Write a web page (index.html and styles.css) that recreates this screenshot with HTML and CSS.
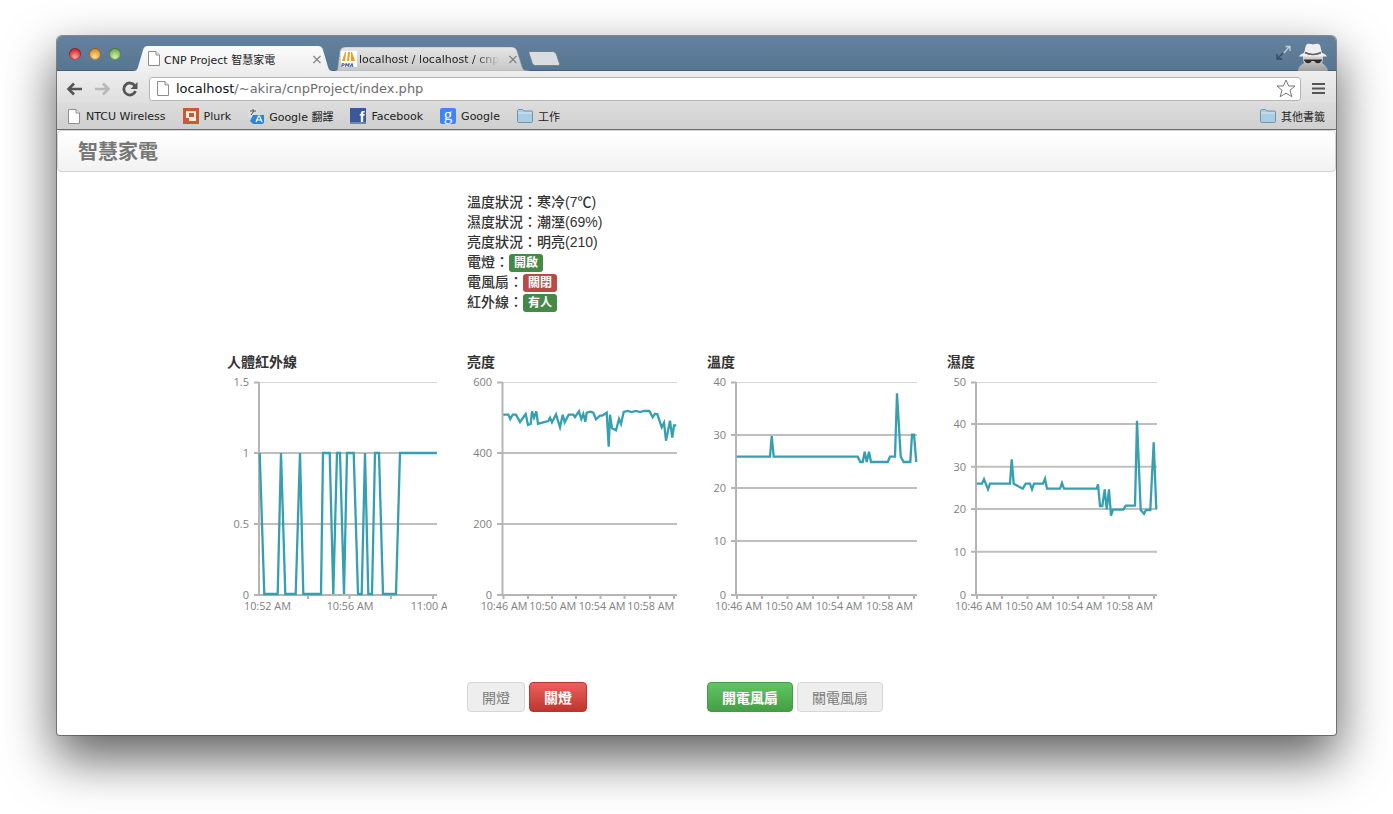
FILE: index.html
```html
<!DOCTYPE html>
<html lang="zh-Hant">
<head>
    <meta charset="UTF-8">
    <title>CNP Project 智慧家電</title>
    <link rel="stylesheet" href="styles.css">
</head>
<body>
    <svg class="defs" width="0" height="0">
        <defs>
            <symbol id="doc" viewBox="0 0 12 15">
                <path d="M.5.5h7.500l3.500 3.500v10.500h-11z" fill="#fff" stroke="#8e8e8e"/>
                <path d="M8 .5v3.500h3.500" fill="#eee" stroke="#8e8e8e"/>
            </symbol>
            <symbol id="folder" viewBox="0 0 16 14">
                <path d="M.5 2c0-1 .5-1.500 1.500-1.500h3.500l1.500 1.500h7.500c.7 0 1 .4 1 1v9.500c0 .6-.4 1-1 1h-12.500c-.9 0-1.500-.4-1.500-1z" fill="#a9cde2" stroke="#6f94ac"/>
                <path d="M1 4h14" stroke="#d9ebf5"/>
            </symbol>
            <linearGradient id="tabOn" x1="0" y1="0" x2="0" y2="1">
                <stop offset="0" stop-color="#fbfbfb"/><stop offset="1" stop-color="#eeeeee"/>
            </linearGradient>
            <linearGradient id="tabOff" x1="0" y1="0" x2="0" y2="1">
                <stop offset="0" stop-color="#e6e6e6"/><stop offset="1" stop-color="#c6c6c6"/>
            </linearGradient>
            <linearGradient id="spyFace" x1="0" y1="0" x2="0" y2="1">
                <stop offset="0" stop-color="#d6d6d6"/><stop offset="1" stop-color="#9d9d9d"/>
            </linearGradient>
        </defs>
    </svg>

    <div class="window">
        <div class="titlebar">
            <div class="lights">
                <span class="light red"></span>
                <span class="light amber"></span>
                <span class="light green"></span>
            </div>
            <div class="tabs">
                <div class="tab tab-on">
                    <svg class="tab-bg" width="200" height="25"><path d="M0 25c3 0 4-1 5-4l5-17c1-3 2-4 5-4h170c3 0 4 1 5 4l5 17c1 3 2 4 5 4z" fill="url(#tabOn)"/></svg>
                    <svg class="ico-doc" width="12" height="15"><use href="#doc"/></svg>
                    <span class="tab-title">CNP Project 智慧家電</span>
                    <span class="tab-x">×</span>
                </div>
                <div class="tab tab-off">
                    <svg class="tab-bg" width="195" height="24"><path d="M0 24c2 0 3-1 3-4l2-16c1-3 3-4 6-4h165c3 0 5 1 6 4l5 16c1 3 3 4 8 4z" fill="url(#tabOff)" stroke="#8c9aa8" stroke-width=".5"/></svg>
                    <svg class="ico-pma" width="16" height="16" viewBox="0 0 16 16">
                        <rect width="16" height="16" fill="#fff"/>
                        <path d="M1 10l3-9h1l-1 9zM6 10l1-9h2l-1 9zM10 10v-9h1l3 9z" fill="#f29a1f"/>
                        <text x="0" y="15.500" class="pma-text">PMA</text>
                    </svg>
                    <span class="tab-title tab-fade">localhost / localhost / cnp</span>
                    <span class="tab-x">×</span>
                </div>
                <svg class="tab-new" width="33" height="16"><path d="M1.500 .5h23c2 0 3 1 4 3l3 9c.4 1.500-.5 2-2 2h-22c-2 0-3-1-3.500-3l-3-9c-.3-1.300 .5-2 .5-2z" fill="#d8dde2" stroke="#6f7f8e"/></svg>
            </div>
            <svg class="ico-full" width="15" height="16" viewBox="0 0 15 16">
                <path d="M8 8l5-6M9.500 1.500h4.500v4.500" fill="none" stroke="#c3ced8" stroke-width="1.300"/>
                <path d="M7 8l-5 5M1 9v5h5" fill="none" stroke="#2f4a61" stroke-width="1.300"/>
            </svg>
            <svg class="ico-spy" width="32" height="28" viewBox="0 0 32 28">
                <path d="M1 28c0-4 3-6 6-8-1-2-1-4-1-7h20c0 3 0 5-1 7 3 2 5 4 6 8z" fill="url(#spyFace)"/>
                <path d="M9 2c2-2 5-1 7-.5 2-.5 5-1.500 7 .5l2 8c2 .5 4 1.500 5 3.500H2c1-2 3-3 5-3.500z" fill="#efefef"/>
                <path d="M8 9.500c4 2.500 12 2.500 16 0" fill="none" stroke="#5f5f5f" stroke-width="1.500"/>
                <path d="M7 16.500h18v1l-1 .5c-.5 3-5.500 3-6.500 0h-3c-1 3-6 3-6.500 0l-1-.5z" fill="#2c2c2c"/>
            </svg>
        </div>

        <div class="toolbar">
            <svg class="nav-ico" width="17" height="14" viewBox="0 0 17 14"><path d="M16 7H3M8 1.500L2.500 7 8 12.500" fill="none" stroke="#555" stroke-width="2.600"/></svg>
            <svg class="nav-ico" width="17" height="14" viewBox="0 0 17 14"><path d="M1 7h13M9 1.500L14.500 7 9 12.500" fill="none" stroke="#b8b8b8" stroke-width="2.600"/></svg>
            <svg class="nav-ico" width="16" height="16" viewBox="0 0 16 16"><path d="M13.500 10a6 6 0 1 1-.8-5.500" fill="none" stroke="#555" stroke-width="2.800"/><path d="M15.500 1v7h-7z" fill="#555"/></svg>
            <div class="omnibox">
                <svg class="ico-doc" width="12" height="15"><use href="#doc"/></svg>
                <span class="url"><b>localhost</b>/~akira/cnpProject/index.php</span>
                <svg class="ico-star" width="20" height="19" viewBox="0 0 20 19"><path d="M10 1l2.700 6h6.300l-5 4.200 1.800 6.500L10 14.200l-5.800 3.500L6 11.200 1 7h6.300z" fill="#fff" stroke="#777"/></svg>
            </div>
            <svg class="ico-menu" width="13" height="13" viewBox="0 0 13 13"><path d="M0 2h13M0 6.500h13M0 11h13" stroke="#555" stroke-width="2.200"/></svg>
        </div>

        <div class="bookmarks">
            <a class="mark"><svg class="mark-doc" width="12" height="15"><use href="#doc"/></svg>NTCU Wireless</a>
            <a class="mark">
                <svg width="16" height="16" viewBox="0 0 16 16"><rect width="16" height="16" fill="#cb5a2e"/><rect x="3" y="3" width="10" height="10" fill="#f5ece6"/><rect x="6" y="5" width="5" height="4" fill="#cb5a2e"/><rect x="3" y="10" width="3" height="3" fill="#cb5a2e"/></svg>Plurk</a>
            <a class="mark">
                <svg width="16" height="16" viewBox="0 0 16 16"><rect width="10" height="10" rx="1" fill="#dcdcdc"/><path d="M2 3h6M5 1v2M3 7l3-4" stroke="#555" fill="none"/><path d="M5 7l-3 6 3 3h9c1 0 2-1 2-2V7z" fill="#2b86d9"/><path d="M8 14l2.500-6h1l2.500 6M9 12h4" stroke="#fff" fill="none" stroke-width="1.200"/></svg>Google 翻譯</a>
            <a class="mark"><span class="logo logo-fb">f</span>Facebook</a>
            <a class="mark"><span class="logo logo-g">g</span>Google</a>
            <a class="mark"><svg width="16" height="14"><use href="#folder"/></svg>工作</a>
            <a class="mark mark-end"><svg width="16" height="14"><use href="#folder"/></svg>其他書籤</a>
        </div>

        <div class="page">
            <div class="navbar"><span class="brand">智慧家電</span></div>

            <div class="container">
                <div class="row">
                    <div class="status">
                        溫度狀況：寒冷(7℃)<br>
                        濕度狀況：潮溼(69%)<br>
                        亮度狀況：明亮(210)<br>
                        電燈：<span class="label label-ok">開啟</span><br>
                        電風扇：<span class="label label-off">關閉</span><br>
                        紅外線：<span class="label label-ok">有人</span>
                    </div>
                </div>

                <div class="row charts">
                    <div class="chart">
                        <div class="chart-title">人體紅外線</div>
                        <svg width="220" height="240">
                            <path class="grid-top" d="M32 10.500H210"/>
                            <path class="grid" d="M32 81H210M32 152H210"/>
                            <path class="axis" d="M32 10V223M27 10.500h5M27 81h5M27 152h5M27 223H210M81 223v4M122.500 223v4M164 223v4M206 223v4"/>
                            <text class="tick end" x="22" y="14">1.5</text>
                            <text class="tick end" x="22" y="85">1</text>
                            <text class="tick end" x="22" y="156">0.5</text>
                            <text class="tick end" x="22" y="227">0</text>
                            <text class="tick" x="17" y="238">10:52 AM</text>
                            <text class="tick" x="99.700" y="238">10:56 AM</text>
                            <text class="tick" x="183.700" y="238">11:00 A</text>
                            <polyline class="line" points="32.700,81 37.300,222 50.700,222 54,81 58.300,222 68.700,222 73,81 76.300,222 94,222 96,81 102.700,81 106.300,222 110,81 113,81 117,222 120,81 126.700,81 131,222 134.700,222 138,81 141.300,222 145,222 148,81 152,81 156,222 169,222 173,81 209.700,81"/>
                        </svg>
                    </div>
                    <div class="chart">
                        <div class="chart-title">亮度</div>
                        <svg width="220" height="240">
                            <path class="grid-top" d="M35 10.500H210"/>
                            <path class="grid" d="M35 81H210M35 152H210"/>
                            <path class="axis" d="M35.500 10V223M30 10.500h5M30 81h5M30 152h5M30 223H210M36.500 223v4M61 223v4M85 223v4M109 223v4M133.500 223v4M157.500 223v4M183 223v4M207 223v4"/>
                            <text class="tick end" x="25" y="14">600</text>
                            <text class="tick end" x="25" y="85">400</text>
                            <text class="tick end" x="25" y="156">200</text>
                            <text class="tick end" x="25" y="227">0</text>
                            <text class="tick" x="13.700" y="238">10:46 AM</text>
                            <text class="tick" x="62.300" y="238">10:50 AM</text>
                            <text class="tick" x="111.700" y="238">10:54 AM</text>
                            <text class="tick" x="160.300" y="238">10:58 AM</text>
                            <polyline class="line" points="36.300,42.700 41.300,42.700 43.300,47 45.700,42.700 49,42.700 53,50 58.700,42 61,53 63.700,52 65,39.300 67,45.700 69.300,39.300 71,51.700 81.300,49 83,45.700 85,50.300 89,42.300 93,55.300 95.700,42.700 97.700,50.300 101.700,42.700 106.300,42.700 108,45 112,39.300 114.300,47 116.300,42 118.300,49.700 119.700,40.700 123.700,39.700 126.300,40.700 129,47.300 133,43.700 135.300,43.700 139.700,40.700 141.700,74.700 143,42.700 145,56.300 149,58.300 152,47 154,52 156.700,40 160.700,39 164.700,40 168.700,39 173,40 177,39 182.300,39 185.700,45.300 188,41.700 190.300,42.300 194.700,55.300 197,50.700 199,68.700 203,48.700 205.300,65.700 207,53.300 209.300,53.300"/>
                        </svg>
                    </div>
                    <div class="chart">
                        <div class="chart-title">溫度</div>
                        <svg width="220" height="240">
                            <path class="grid-top" d="M29 10.500H210"/>
                            <path class="grid" d="M29 63H210M29 116H210M29 169H210"/>
                            <path class="axis" d="M29 10V223M24 10.500h5M24 63h5M24 116h5M24 169h5M24 223H210M30 223v4M55 223v4M80.500 223v4M106 223v4M131 223v4M156.500 223v4M182 223v4M207 223v4"/>
                            <text class="tick end" x="19" y="14">40</text>
                            <text class="tick end" x="19" y="67">30</text>
                            <text class="tick end" x="19" y="120">20</text>
                            <text class="tick end" x="19" y="173">10</text>
                            <text class="tick end" x="19" y="227">0</text>
                            <text class="tick" x="8" y="238">10:46 AM</text>
                            <text class="tick" x="58.300" y="238">10:50 AM</text>
                            <text class="tick" x="108.700" y="238">10:54 AM</text>
                            <text class="tick" x="159" y="238">10:58 AM</text>
                            <polyline class="line" points="29.700,84.700 63,84.700 64.700,64 66.700,84.700 150.700,84.700 153.300,90 155.700,90 157.700,79.700 159.700,90 162,79.700 164,90 180.700,90 183,84.700 188,84.700 190,21.300 193.700,84.700 196.700,90 203.300,90 205,62.700 207,62.700 209.300,90"/>
                        </svg>
                    </div>
                    <div class="chart">
                        <div class="chart-title">濕度</div>
                        <svg width="220" height="240">
                            <path class="grid-top" d="M29 10.500H210"/>
                            <path class="grid" d="M29 52H210M29 94.700H210M29 137H210M29 179.700H210"/>
                            <path class="axis" d="M29 10V223M24 10.500h5M24 52h5M24 94.700h5M24 137h5M24 179.700h5M24 223H210M30 223v4M55 223v4M80.500 223v4M106 223v4M131 223v4M156.500 223v4M182 223v4M207 223v4"/>
                            <text class="tick end" x="19" y="14">50</text>
                            <text class="tick end" x="19" y="56">40</text>
                            <text class="tick end" x="19" y="99">30</text>
                            <text class="tick end" x="19" y="141">20</text>
                            <text class="tick end" x="19" y="184">10</text>
                            <text class="tick end" x="19" y="227">0</text>
                            <text class="tick" x="8" y="238">10:46 AM</text>
                            <text class="tick" x="58.300" y="238">10:50 AM</text>
                            <text class="tick" x="108.700" y="238">10:54 AM</text>
                            <text class="tick" x="159" y="238">10:58 AM</text>
                            <polyline class="line" points="29.700,111.700 35,111.700 37,107.300 41,117.300 43,111.700 63,111.700 64.700,87.300 66.700,111.700 75.700,116.700 78.700,111.700 83,111.700 85,117.300 87,111.700 96,111.700 98,106.700 100,116.700 113,116.700 115,111 117,116.700 149.700,116.700 151,112.300 153,134 155.300,134 157.700,117.300 159.700,137.300 162,117.300 164,143.700 166,137.700 176.300,137.700 178.700,133.700 188,133.700 190,48.700 193.700,138 197,141.700 199,138 203.300,138 206.700,70.300 209.300,137.300"/>
                        </svg>
                    </div>
                </div>

                <div class="row actions">
                    <div class="btn-set col-2">
                        <button class="btn">開燈</button>
                        <button class="btn btn-danger">關燈</button>
                    </div>
                    <div class="btn-set">
                        <button class="btn btn-success">開電風扇</button>
                        <button class="btn">關電風扇</button>
                    </div>
                </div>
            </div>
        </div>
    </div>
</body>
</html>
```

FILE: styles.css
```css
body {
    margin: 0;
    height: 814px;
    overflow: hidden;
    background: #fff;
    font-family: "Liberation Sans", "Noto Sans CJK TC", sans-serif;
    font-size: 14px;
    color: #333;
}

.defs {
    display: block;
    height: 0;
}

/* browser window */
.window {
    width: 1279px;
    height: 699px;
    margin: 36px 0 0 57px;
    display: flex;
    flex-direction: column;
    overflow: hidden;
    border-radius: 5px 5px 3px 3px;
    background: #fff;
    box-shadow: 0 0 0 1px rgba(60, 60, 60, .55), 0 22px 50px 2px rgba(0, 0, 0, .62);
}

.titlebar {
    height: 35px;
    flex: none;
    display: flex;
    align-items: flex-end;
    background: linear-gradient(#64829f, #577691);
    border-bottom: 1px solid #4a6075;
    box-sizing: border-box;
    position: relative;
}

.lights {
    display: flex;
    gap: 8px;
    align-self: flex-start;
    margin: 12px 0 0 12px;
    width: 64px;
}

.light {
    width: 12px;
    height: 12px;
    border-radius: 50%;
    box-shadow: inset 0 0 0 1px rgba(0, 0, 0, .3);
}

.red { background: radial-gradient(circle at 50% 75%, #ffa9a3, #d9363a 60%, #a8252b); }
.amber { background: radial-gradient(circle at 50% 75%, #ffe3a0, #dd9a34 60%, #a87224); }
.green { background: radial-gradient(circle at 50% 75%, #d5f2b4, #80b860 60%, #5a8b44); }

.tabs {
    display: flex;
    align-items: flex-end;
    flex: 1;
    margin-bottom: -1px;
}

.tab {
    position: relative;
    height: 25px;
    display: flex;
    align-items: center;
    font-family: "DejaVu Sans", "Noto Sans CJK TC", sans-serif;
    font-size: 11px;
    color: #222;
}

.tab > * {
    position: relative;
}

.tab .tab-bg {
    position: absolute;
    left: 0;
    bottom: 0;
}

.tab-on {
    width: 200px;
    padding-left: 15px;
    box-sizing: border-box;
    z-index: 1;
}

.tab-off {
    width: 195px;
    height: 24px;
    margin-left: 2px;
    padding-left: 6px;
    box-sizing: border-box;
}

.ico-doc {
    flex: none;
}

.ico-pma {
    flex: none;
}

.tab-title {
    margin-left: 4px;
    white-space: nowrap;
    width: 147px;
    overflow: hidden;
}

.tab-fade {
    width: 148px;
    margin-left: 2px;
    -webkit-mask-image: linear-gradient(90deg, #000 78%, transparent 95%);
    mask-image: linear-gradient(90deg, #000 78%, transparent 95%);
}

.tab-x {
    font-size: 14px;
    line-height: 14px;
    color: #7d7d7d;
}

.tab-new {
    margin: 0 0 4px -2px;
}

.pma-text {
    font-size: 5px;
    font-style: italic;
    font-weight: bold;
    fill: #2b4a8c;
}

.ico-full {
    position: absolute;
    left: 1219px;
    top: 9px;
}

.ico-spy {
    position: absolute;
    left: 1240px;
    top: 7px;
}

.toolbar {
    height: 32px;
    flex: none;
    display: flex;
    align-items: center;
    padding: 3px 0 0 9px;
    box-sizing: border-box;
    background: linear-gradient(#eeeeee, #dedede);
}

.nav-ico {
    margin-right: 11px;
    flex: none;
}

.omnibox {
    width: 1152px;
    height: 24px;
    display: flex;
    align-items: center;
    padding: 0 4px 0 7px;
    box-sizing: border-box;
    background: #fff;
    border: 1px solid #b4b4b4;
    border-radius: 3px;
}

.url {
    flex: 1;
    margin-left: 7px;
    font-family: "DejaVu Sans", sans-serif;
    font-size: 13px;
    color: #6d6d6d;
}

.url b {
    font-weight: normal;
    color: #111;
}

.ico-menu {
    margin-left: 11px;
}

.bookmarks {
    height: 27px;
    flex: none;
    display: flex;
    align-items: center;
    gap: 17px;
    padding-left: 11px;
    box-sizing: border-box;
    background: linear-gradient(#dcdcdc, #cfcfcf);
    border-bottom: 1px solid #6c6c6c;
    font-family: "DejaVu Sans", "Noto Sans CJK TC", sans-serif;
    font-size: 11px;
    color: #222;
}

.mark {
    display: flex;
    align-items: center;
    gap: 5px;
    white-space: nowrap;
}

.mark-doc {
    margin-right: 1px;
}

.mark-end {
    margin-left: auto;
    margin-right: 11px;
}

.logo {
    width: 16px;
    height: 16px;
    display: block;
    text-align: center;
    color: #fff;
    font-weight: bold;
    font-family: "Liberation Sans", sans-serif;
}

.logo-fb {
    background: #3b5998;
    font-size: 15px;
    line-height: 18px;
    text-align: right;
    padding-right: 2px;
    width: 14px;
    box-shadow: inset 0 -2px 0 #6d84b4;
}

.logo-g {
    background: #4185f4;
    border-radius: 2px;
    font-family: "Liberation Serif", serif;
    font-size: 17px;
    line-height: 13px;
    font-weight: normal;
}

/* page */
.page {
    flex: 1;
    min-height: 0;
}

.navbar {
    height: 42px;
    box-sizing: border-box;
    padding: 0 0 2px 20px;
    display: flex;
    align-items: center;
    background: linear-gradient(#ffffff, #f2f2f2);
    border: 1px solid #d4d4d4;
    border-radius: 4px;
}

.brand {
    font-size: 20px;
    font-weight: bold;
    color: #777;
}

.container {
    padding-left: 170px;
}

.row {
    display: grid;
    grid-template-columns: repeat(4, 220px);
    column-gap: 20px;
}

.status {
    grid-column: 2;
    padding-top: 20px;
    line-height: 20px;
    white-space: nowrap;
    font-weight: 500;
}

.label {
    display: inline-block;
    padding: 0 5px;
    height: 18px;
    line-height: 18px;
    font-size: 12px;
    font-weight: bold;
    color: #fff;
    border-radius: 3px;
    vertical-align: top;
    margin-top: 2px;
}

.label-ok { background: #468847; }
.label-off { background: #b94a48; }

.charts {
    margin-top: 40px;
}

.chart-title {
    font-weight: bold;
    line-height: 20px;
}

.chart svg {
    display: block;
    overflow: hidden;
}

.grid-top {
    stroke: #d9d9d9;
    fill: none;
}

.grid {
    stroke: #bfbfbf;
    stroke-width: 2;
    fill: none;
}

.axis {
    stroke: #b5b5b5;
    stroke-width: 2;
    fill: none;
}

.tick {
    font-family: "Open Sans", sans-serif;
    font-size: 10.8px;
    fill: #808080;
}

.end {
    text-anchor: end;
    font-size: 11px;
}

.line {
    fill: none;
    stroke: #36a0b0;
    stroke-width: 2.300;
}

.actions {
    margin-top: 70px;
}

.col-2 {
    grid-column: 2;
}

.btn-set {
    display: flex;
    gap: 4px;
}

.btn {
    height: 30px;
    padding: 0 14px;
    font: 14px "Liberation Sans", "Noto Sans CJK TC", sans-serif;
    color: #7c7c7c;
    background: #eeeeee;
    border: 1px solid #d6d6d6;
    border-radius: 4px;
}

.btn-danger {
    color: #fff;
    font-weight: bold;
    background: linear-gradient(#ee5f5b, #bd362f);
    border-color: #b8342e;
}

.btn-success {
    color: #fff;
    font-weight: bold;
    background: linear-gradient(#62c462, #469e46);
    border-color: #459a45;
}
```
